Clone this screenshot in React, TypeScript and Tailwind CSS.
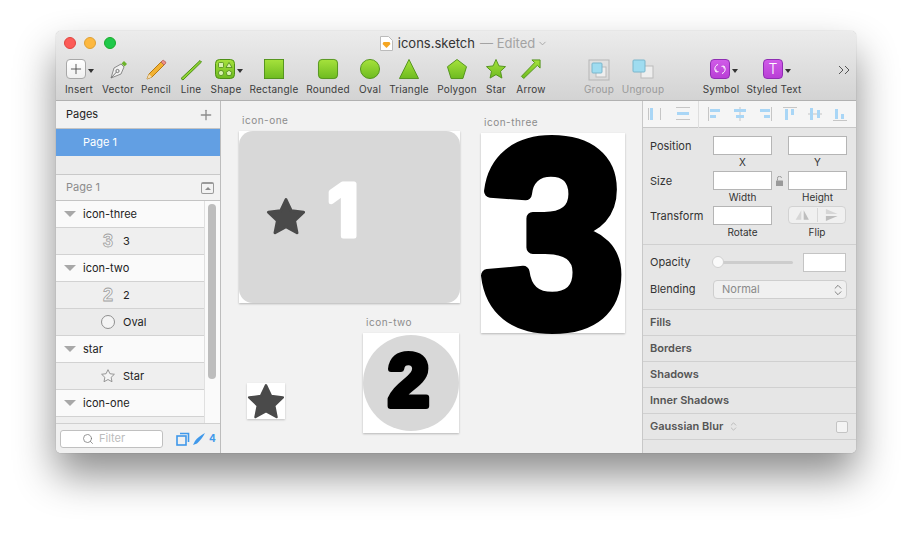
import type { ReactNode } from 'react';
import { ChevronDown, ChevronsUpDown, Search, Plus } from 'lucide-react';

const green = { fill: 'url(#grn)', stroke: '#4d8f16', strokeWidth: 1 };

function Caret() {
  return <span className="mt-[10px] ml-[2px] h-0 w-0 border-x-[3.5px] border-t-[4px] border-x-transparent border-t-[#333]" />;
}

function ToolItem({ label, w, ml = 0, dim, children }: { label: string; w: number; ml?: number; dim?: boolean; children: ReactNode }) {
  return (
    <div className="flex shrink-0 flex-col items-center" style={{ width: w, marginLeft: ml }}>
      <div className="flex h-[24px] items-start justify-center">{children}</div>
      <span className={`whitespace-nowrap text-[10px] leading-[12px] tracking-[0.2px] ${dim ? 'text-[#9a9a9a]' : 'text-[#3c3c3c]'}`}>{label}</span>
    </div>
  );
}

function Shape({ children, size = 22 }: { children: ReactNode; size?: number }) {
  return (
    <svg width={size} height={size} viewBox="0 0 22 22" className="overflow-visible">
      {children}
    </svg>
  );
}

function Toolbar() {
  return (
    <div className="flex items-start pl-[6px] pt-[3px]">
      <ToolItem label="Insert" w={34}>
        <div className="ml-[1px] flex">
          <div className="flex h-[20px] w-[20px] items-center justify-center rounded-[4px] border border-[#a8a8a8] bg-gradient-to-b from-white to-[#f0f0f0]">
            <Plus size={16} strokeWidth={1.3} className="text-[#444]" />
          </div>
          <Caret />
        </div>
      </ToolItem>
      <ToolItem label="Vector" w={44}>
        <Shape>
          <path d="M17 2 L20 5 L17.5 7.5 L14.5 4.5 Z" fill="#6cb32c" />
          <path d="M14 5 L17 8 L14 15 L4 19 L7 9 Z" fill="#f1f1f1" stroke="#8a8a8a" />
          <circle cx="10.5" cy="12" r="1.6" fill="none" stroke="#777" />
          <path d="M4 19 L9.5 13" stroke="#777" />
        </Shape>
      </ToolItem>
      <ToolItem label="Pencil" w={32}>
        <Shape>
          <path d="M16 3 L19 6 L7 18 L2 20 L4 15 Z" fill="#f2b233" stroke="#b67a14" />
          <path d="M16 3 L17.5 1.5 Q18.5 1 19.5 2 L20.5 3 Q21 4 20.5 4.5 L19 6 Z" fill="#ee8f86" stroke="#b9695f" />
          <path d="M4 15 L7 18 L2 20 Z" fill="#f4dcb0" />
        </Shape>
      </ToolItem>
      <ToolItem label="Line" w={38}>
        <Shape>
          <path d="M20 1.5 L21.5 3 L3 21 L1 19.5 Z" fill="#8fd332" stroke="#4d8f16" />
        </Shape>
      </ToolItem>
      <ToolItem label="Shape" w={32}>
        <div className="ml-[5px] flex">
          <svg width="20" height="20" viewBox="0 0 20 20">
            <rect x="0.5" y="0.5" width="19" height="19" rx="4" {...green} />
            <rect x="3.5" y="3.5" width="5" height="5" rx="1" fill="#d8f2ae" stroke="#3f7a10" strokeWidth="0.7" />
            <path d="M14 3.5 L17 8.5 L11 8.5 Z" fill="#d8f2ae" stroke="#3f7a10" strokeWidth="0.7" />
            <circle cx="6" cy="14" r="2.6" fill="#d8f2ae" stroke="#3f7a10" strokeWidth="0.7" />
            <path d="M14 11.3 L16.8 13.4 L15.7 16.5 L12.3 16.5 L11.2 13.4 Z" fill="#d8f2ae" stroke="#3f7a10" strokeWidth="0.7" />
          </svg>
          <Caret />
        </div>
      </ToolItem>
      <ToolItem label="Rectangle" w={64}>
        <Shape size={20}>
          <rect x="0.5" y="0.5" width="21" height="21" {...green} />
        </Shape>
      </ToolItem>
      <ToolItem label="Rounded" w={44}>
        <Shape size={20}>
          <rect x="0.5" y="0.5" width="21" height="21" rx="4" {...green} />
        </Shape>
      </ToolItem>
      <ToolItem label="Oval" w={40}>
        <Shape size={20}>
          <circle cx="11" cy="11" r="10.5" {...green} />
        </Shape>
      </ToolItem>
      <ToolItem label="Triangle" w={38}>
        <Shape size={20}>
          <path d="M11 0.5 L21.5 21.5 L0.5 21.5 Z" {...green} />
        </Shape>
      </ToolItem>
      <ToolItem label="Polygon" w={44} ml={7}>
        <Shape size={20}>
          <path d="M11 0.5 L21.5 8.5 L17.5 21.5 L4.5 21.5 L0.5 8.5 Z" {...green} />
        </Shape>
      </ToolItem>
      <ToolItem label="Star" w={34}>
        <Shape size={20}>
          <path d="M11 0.5 L14.2 7.6 L21.5 8.4 L16 13.5 L17.5 21 L11 17.2 L4.5 21 L6 13.5 L0.5 8.4 L7.8 7.6 Z" {...green} />
        </Shape>
      </ToolItem>
      <ToolItem label="Arrow" w={36}>
        <Shape size={20}>
          <path d="M21 1 L21 10 L18 7 L3 21.5 L0.5 19 L15 4 L12 1 Z" {...green} />
        </Shape>
      </ToolItem>
      <ToolItem label="Group" w={38} ml={31} dim>
        <svg width="22" height="22" viewBox="0 0 22 22">
          <rect x="1" y="1" width="20" height="20" fill="none" stroke="#b5b5b5" />
          <rect x="8" y="8" width="10" height="10" fill="#eee" stroke="#bbb" />
          <rect x="4" y="4" width="10" height="10" rx="1" fill="#9fdcf0" stroke="#7ab6cc" />
        </svg>
      </ToolItem>
      <ToolItem label="Ungroup" w={50} dim>
        <svg width="22" height="22" viewBox="0 0 22 22">
          <rect x="9" y="7" width="12" height="12" fill="#eee" stroke="#bbb" />
          <rect x="1" y="1" width="12" height="12" rx="1" fill="#9fdcf0" stroke="#7ab6cc" />
        </svg>
      </ToolItem>
      <ToolItem label="Symbol" w={50} ml={28}>
        <div className="ml-[6px] flex">
          <div className="flex h-[20px] w-[20px] items-center justify-center rounded-[4px] border border-[#8f2db3] bg-gradient-to-b from-[#d05be8] to-[#b93ed6]">
            <svg width="12" height="12" viewBox="0 0 12 12" fill="none" stroke="#fff" strokeWidth="1">
              <path d="M4 1.5 A4.5 4.5 0 0 0 2.2 9 M2 6.5 L2.2 9 L4.5 8.6" />
              <path d="M8 10.5 A4.5 4.5 0 0 0 9.8 3 M10 5.5 L9.8 3 L7.5 3.4" />
            </svg>
          </div>
          <Caret />
        </div>
      </ToolItem>
      <ToolItem label="Styled Text" w={56}>
        <div className="ml-[6px] flex">
          <div className="flex h-[20px] w-[20px] items-center justify-center rounded-[4px] border border-[#8f2db3] bg-gradient-to-b from-[#d05be8] to-[#b93ed6] text-[14px] font-light leading-none text-white">T</div>
          <Caret />
        </div>
      </ToolItem>
      <svg width="12" height="10" viewBox="0 0 12 10" fill="none" stroke="#555" strokeWidth="1" className="ml-[36px] mt-[6px]">
        <path d="M1 1 L5 5 L1 9 M7 1 L11 5 L7 9" />
      </svg>
    </div>
  );
}

function TitleBar() {
  return (
    <div className="relative flex h-[25px] items-center justify-center">
      <div className="absolute left-[8px] top-[6px] flex gap-[8px]">
        <span className="h-[12px] w-[12px] rounded-full border border-[#e0443e] bg-[#fc5b57]" />
        <span className="h-[12px] w-[12px] rounded-full border border-[#dea034] bg-[#fdb83f]" />
        <span className="h-[12px] w-[12px] rounded-full border border-[#1aab29] bg-[#1fc84a]" />
      </div>
      <div className="flex items-center pl-[16px] text-[13px] leading-none">
        <svg width="13" height="15" viewBox="0 0 13 15" className="mr-[5px]">
          <path d="M0.5 0.5 H8.5 L12.5 4.5 V14.5 H0.5 Z" fill="#fff" stroke="#bbb" />
          <path d="M3.5 6 H9.5 L10.5 8 L6.5 12 L2.5 8 Z" fill="#f5a623" />
        </svg>
        <span className="text-[#333]">icons.sketch</span>
        <span className="ml-[5px] text-[#a3a3a3]">— Edited</span>
        <ChevronDown size={11} className="ml-[2px] text-[#a3a3a3]" />
      </div>
    </div>
  );
}

function GroupRow({ name }: { name: string }) {
  return (
    <div className="flex h-[27px] items-center border-b border-[#d2d2d2] bg-[#fafafa] pl-[8px]">
      <span className="h-0 w-0 border-x-[6px] border-t-[6px] border-x-transparent border-t-[#a8a8a8]" />
      <span className="ml-[7px] text-[11px] text-[#222]">{name}</span>
    </div>
  );
}

function ChildRow({ name, icon, dark }: { name: string; icon: ReactNode; dark?: boolean }) {
  return (
    <div className={`flex h-[27px] items-center border-b pl-[44px] ${dark ? 'border-[#d2d2d2] bg-[#ebebeb]' : 'border-[#d2d2d2] bg-[#efefef]'}`}>
      <span className="flex w-[16px] justify-center">{icon}</span>
      <span className="ml-[7px] text-[11px] text-[#222]">{name}</span>
    </div>
  );
}

function OutlineDigit({ d }: { d: string }) {
  return (
    <span className="font-['Liberation_Sans'] text-[18px] font-bold leading-none text-[#f4f4f4] [-webkit-text-stroke:0.8px_#a0a0a0]">{d}</span>
  );
}

const starPoints = '12,2.5 14.9,8.6 21.6,9.4 16.7,14 18,20.6 12,17.3 6,20.6 7.3,14 2.4,9.4 9.1,8.6';

function Sidebar() {
  return (
    <aside className="flex w-[165px] shrink-0 flex-col border-r border-[#bdbdbd] bg-[#f2f2f2]">
      <div className="flex h-[28px] items-center justify-between border-b border-[#c4c4c4] pl-[10px] pr-[6px] text-[11px] text-[#222]">
        Pages
        <Plus size={16} strokeWidth={2} className="text-[#8d8d8d]" />
      </div>
      <div className="flex h-[27px] items-center bg-[#629fe3] pl-[27px] text-[11px] text-white">Page 1</div>
      <div className="h-[19px] border-b border-[#c9c9c9] bg-[#ececec]" />
      <div className="flex h-[26px] items-center justify-between border-b border-[#c4c4c4] pl-[10px] pr-[6px] text-[11px] text-[#8c8c8c]">
        Page 1
        <span className="flex h-[12px] w-[13px] items-center justify-center rounded-[2px] border border-[#9a9a9a] border-t-2">
          <span className="h-0 w-0 border-x-[3px] border-b-[3px] border-x-transparent border-b-[#8c8c8c]" />
        </span>
      </div>
      <div className="flex flex-1 overflow-hidden">
        <div className="w-[149px] shrink-0 border-r border-[#e0e0e0]">
          <GroupRow name="icon-three" />
          <ChildRow name="3" icon={<OutlineDigit d="3" />} />
          <GroupRow name="icon-two" />
          <ChildRow name="2" icon={<OutlineDigit d="2" />} />
          <ChildRow name="Oval" dark icon={<span className="h-[14px] w-[14px] rounded-full border border-[#8f8f8f] bg-[#f4f4f4]" />} />
          <GroupRow name="star" />
          <ChildRow name="Star" icon={
            <svg width="16" height="16" viewBox="0 0 24 24" fill="#f4f4f4" stroke="#8f8f8f" strokeWidth="1.4" strokeLinejoin="round"><polygon points={starPoints} /></svg>
          } />
          <GroupRow name="icon-one" />
          <div className="h-[27px] border-b border-[#d2d2d2] bg-[#efefef]" />
        </div>
        <div className="flex-1 bg-[#fafafa] pl-[3px] pt-[3px]">
          <div className="h-[175px] w-[8px] rounded-full bg-[#bdbdbd]" />
        </div>
      </div>
      <div className="flex h-[30px] items-center border-t border-[#d0d0d0] bg-[#f0f0f0] pl-[4px]">
        <div className="flex h-[18px] w-[103px] items-center rounded-[3px] border border-[#c0c0c0] bg-white pl-[21px] text-[11px] text-[#bcbcbc]">
          <Search size={12} strokeWidth={1.5} className="mr-[5px] text-[#777]" />
          Filter
        </div>
        <svg width="14" height="14" viewBox="0 0 14 14" fill="none" stroke="#3f98ea" strokeWidth="1.6" className="ml-[13px]">
          <rect x="1" y="4" width="9" height="9" />
          <path d="M4 1.5 H12.5 V10" />
        </svg>
        <svg width="14" height="14" viewBox="0 0 14 14" fill="#3f98ea" className="ml-[2px]">
          <path d="M13 1 C9 3 5 6 3 9 L1 13 L5 11.5 C8 9 11 5 13 1 Z" />
        </svg>
        <span className="ml-[3px] text-[10px] font-bold text-[#3f98ea]">4</span>
      </div>
    </aside>
  );
}

// artboard digits stay real text: a bold face with a round-joined stroke gives the soft shape
function Digit({ d, w, h, size, stroke, fill, x, y, sx = 1, inter }: { d: string; w: number; h: number; size: number; stroke: number; fill: string; x: number; y: number; sx?: number; inter?: boolean }) {
  return (
    <svg width={w} height={h} viewBox={`0 0 ${w} ${h}`} className="block overflow-visible">
      <text
        transform={`translate(${x} ${y}) scale(${sx} 1)`}
        fontSize={size}
        fill={fill}
        stroke={fill}
        strokeWidth={stroke}
        strokeLinejoin="round"
        className={inter ? "font-['Inter'] font-bold" : "font-['Liberation_Sans'] font-bold"}
      >
        {d}
      </text>
    </svg>
  );
}

function Canvas() {
  return (
    <main className="relative flex-1 bg-[#f2f2f2]">
      <span className="absolute left-[21px] top-[12px] text-[10px] tracking-[0.5px] text-[#8c8c8c]">icon-one</span>
      <div className="absolute left-[18px] top-[30px] h-[172px] w-[221px] bg-white shadow-[0_1px_2px_rgba(0,0,0,0.25)]">
        <div className="relative h-full w-full rounded-[14px] bg-[#d8d8d8]">
          <svg width="44" height="44" viewBox="0 0 24 24" fill="#4a4a4a" stroke="#4a4a4a" strokeWidth="1.6" strokeLinejoin="round" className="absolute left-[25px] top-[64px]">
            <polygon points={starPoints} />
          </svg>
          <div className="absolute left-[90px] top-[50px]">
            <Digit d="1" w={29} h={57} size={71} stroke={5} fill="#fff" x={-1} y={54.5} inter />
          </div>
        </div>
      </div>

      <span className="absolute left-[263px] top-[14px] text-[10px] tracking-[0.5px] text-[#8c8c8c]">icon-three</span>
      <div className="absolute left-[260px] top-[32px] h-[200px] w-[144px] bg-white shadow-[0_1px_2px_rgba(0,0,0,0.25)]">
        <Digit d="3" w={144} h={200} size={262} stroke={13} fill="#000" x={0.5} y={191.5} sx={0.98} />
      </div>

      <span className="absolute left-[145px] top-[214px] text-[10px] tracking-[0.5px] text-[#8c8c8c]">icon-two</span>
      <div className="absolute left-[142px] top-[232px] flex h-[100px] w-[96px] items-center justify-center bg-white shadow-[0_1px_2px_rgba(0,0,0,0.25)]">
        <div className="flex h-[96px] w-[96px] items-center justify-center rounded-full bg-[#d8d8d8]">
          <Digit d="2" w={42} h={58} size={74} stroke={6} fill="#000" x={-2} y={52} />
        </div>
      </div>

      <div className="absolute left-[26px] top-[282px] h-[36px] w-[38px] overflow-hidden bg-white shadow-[0_1px_2px_rgba(0,0,0,0.2)]">
        <svg width="44" height="42" viewBox="0 0 24 24" fill="#4a4a4a" stroke="#4a4a4a" strokeWidth="1.4" strokeLinejoin="round" className="-ml-[3px] -mt-[2px]">
          <polygon points={starPoints} />
        </svg>
      </div>
    </main>
  );
}

function AlignIcon({ children }: { children: ReactNode }) {
  return (
    <svg width="18" height="18" viewBox="0 0 18 18" fill="#a9d6f6" className="shrink-0">
      {children}
    </svg>
  );
}

const line = '#c6c6c6';

function Field({ label, w = 59 }: { label: string; w?: number }) {
  return (
    <div className="flex flex-col items-center" style={{ width: w }}>
      <div className="h-[19px] w-full border border-[#b5b5b5] bg-white" />
      <span className="mt-[1px] text-[10px] leading-[13px] text-[#333]">{label}</span>
    </div>
  );
}

function SectionRow({ name, children }: { name: string; children?: ReactNode }) {
  return (
    <div className="flex h-[26px] items-center border-b border-[#d0d0d0] pl-[7px] text-[11px] font-semibold text-[#555]">
      {name}
      {children}
    </div>
  );
}

function Inspector() {
  return (
    <aside className="flex w-[214px] shrink-0 flex-col border-l border-[#c8c8c8] bg-[#e6e6e6] text-[11px]">
      <div className="flex h-[27px] items-center border-b border-[#c8c8c8] bg-[#f5f5f5] pl-[4px]">
        <div className="flex gap-[9px]">
          <AlignIcon>
            <rect x="3" y="3" width="3" height="12" />
            <rect x="13" y="3" width="1" height="12" fill={line} />
            <rect x="1" y="3" width="1" height="12" fill={line} />
          </AlignIcon>
          <AlignIcon>
            <rect x="3" y="7" width="12" height="3" />
            <rect x="2" y="2" width="14" height="1" fill={line} />
            <rect x="2" y="14" width="14" height="1" fill={line} />
          </AlignIcon>
        </div>
        <div className="mx-[6px] h-[27px] w-px bg-[#dedede]" />
        <div className="ml-[1px] flex gap-[7px]">
          <AlignIcon>
            <rect x="2" y="2" width="1" height="14" fill={line} />
            <rect x="4" y="4" width="10" height="3" />
            <rect x="4" y="10" width="6" height="3" />
          </AlignIcon>
          <AlignIcon>
            <rect x="8.5" y="2" width="1" height="14" fill={line} />
            <rect x="3" y="4" width="12" height="3" />
            <rect x="5" y="10" width="8" height="3" />
          </AlignIcon>
          <AlignIcon>
            <rect x="15" y="2" width="1" height="14" fill={line} />
            <rect x="4" y="4" width="10" height="3" />
            <rect x="8" y="10" width="6" height="3" />
          </AlignIcon>
          <AlignIcon>
            <rect x="2" y="2" width="14" height="1" fill={line} />
            <rect x="4" y="4" width="3" height="11" />
            <rect x="10" y="4" width="3" height="6" />
          </AlignIcon>
          <AlignIcon>
            <rect x="2" y="8.5" width="14" height="1" fill={line} />
            <rect x="4" y="3" width="3" height="12" />
            <rect x="11" y="5" width="3" height="8" />
          </AlignIcon>
          <AlignIcon>
            <rect x="2" y="15" width="14" height="1" fill={line} />
            <rect x="4" y="4" width="3" height="10" />
            <rect x="10" y="9" width="3" height="5" />
          </AlignIcon>
        </div>
      </div>

      <div className="border-b border-[#d0d0d0] pb-[3px] pl-[7px] pt-[8px] text-[#333]">
        <div className="flex h-[35px]">
          <span className="w-[63px] pt-[2px]">Position</span>
          <Field label="X" />
          <div className="w-[16px]" />
          <Field label="Y" />
        </div>
        <div className="flex h-[35px]">
          <span className="w-[63px] pt-[2px]">Size</span>
          <Field label="Width" />
          <span className="flex w-[16px] justify-center pt-[5px]">
            <svg width="8" height="10" viewBox="0 0 8 10" fill="none">
              <rect x="0" y="4.5" width="7" height="5.5" rx="0.5" fill="#9a9a9a" />
              <path d="M1.5 4.5 V2.5 A2 2 0 0 1 5.5 2" stroke="#9a9a9a" />
            </svg>
          </span>
          <Field label="Height" />
        </div>
        <div className="flex h-[35px]">
          <span className="w-[63px] pt-[2px]">Transform</span>
          <Field label="Rotate" />
          <div className="w-[16px]" />
          <div className="flex w-[58px] flex-col items-center">
            <div className="flex h-[18px] w-full items-center rounded-[4px] border border-[#d2d2d2] bg-[#f0f0f0]">
              <svg width="29" height="14" viewBox="0 0 29 14" className="border-r border-[#d8d8d8]">
                <path d="M13 2 L13 12 L7 12 Z" fill="#d6d6d6" />
                <path d="M15.5 2 L15.5 12 L21 12 Z" fill="#bdbdbd" />
              </svg>
              <svg width="28" height="14" viewBox="0 0 28 14">
                <path d="M8 1 L20 6 L8 6 Z" fill="#d6d6d6" />
                <path d="M8 8 L20 8 L8 13 Z" fill="#bdbdbd" />
              </svg>
            </div>
            <span className="mt-[2px] text-[10px] leading-[13px] text-[#333]">Flip</span>
          </div>
        </div>
      </div>

      <div className="border-b border-[#d0d0d0] pb-[10px] pl-[7px] pt-[8px] text-[#333]">
        <div className="flex h-[19px] items-center">
          <span className="w-[63px]">Opacity</span>
          <div className="relative h-[3px] w-[80px] rounded-full bg-[#cdcdcd]">
            <span className="absolute -left-[1px] -top-[5px] h-[12px] w-[12px] rounded-full border border-[#d0d0d0] bg-[#fafafa]" />
          </div>
          <div className="ml-[10px] h-[19px] w-[43px] border border-[#c4c4c4] bg-white" />
        </div>
        <div className="mt-[8px] flex h-[19px] items-center">
          <span className="w-[63px]">Blending</span>
          <div className="flex h-[19px] w-[134px] items-center justify-between rounded-[4px] border border-[#cecece] bg-[#f0f0f0] pl-[8px] pr-[1px] text-[#8a8a8a]">
            Normal
            <ChevronsUpDown size={14} strokeWidth={1.2} className="text-[#555]" />
          </div>
        </div>
      </div>

      <SectionRow name="Fills" />
      <SectionRow name="Borders" />
      <SectionRow name="Shadows" />
      <SectionRow name="Inner Shadows" />
      <SectionRow name="Gaussian Blur">
        <ChevronsUpDown size={11} strokeWidth={1.2} className="ml-[5px] text-[#999]" />
        <span className="ml-auto mr-[8px] h-[12px] w-[12px] rounded-[2px] border border-[#c4c4c4] bg-[#f4f4f4]" />
      </SectionRow>
    </aside>
  );
}

export default function App() {
  return (
    <div className="h-[533px] w-[912px] overflow-hidden bg-white pl-[56px] pt-[31px] font-['Inter','Liberation_Sans',sans-serif]">
      <svg width="0" height="0" className="absolute">
        <defs>
          <linearGradient id="grn" x1="0" y1="0" x2="0" y2="1">
            <stop offset="0" stopColor="#a6e23c" />
            <stop offset="1" stopColor="#6ebb20" />
          </linearGradient>
        </defs>
      </svg>
      <div className="flex h-[422px] w-[800px] flex-col overflow-hidden rounded-[5px] shadow-[0_22px_40px_rgba(0,0,0,0.45),0_0_1px_rgba(0,0,0,0.4)]">
        <header className="h-[70px] shrink-0 border-b border-[#b1b1b1] bg-gradient-to-b from-[#ececec] to-[#d3d3d3]">
          <TitleBar />
          <Toolbar />
        </header>
        <div className="flex min-h-0 flex-1">
          <Sidebar />
          <Canvas />
          <Inspector />
        </div>
      </div>
    </div>
  );
}
